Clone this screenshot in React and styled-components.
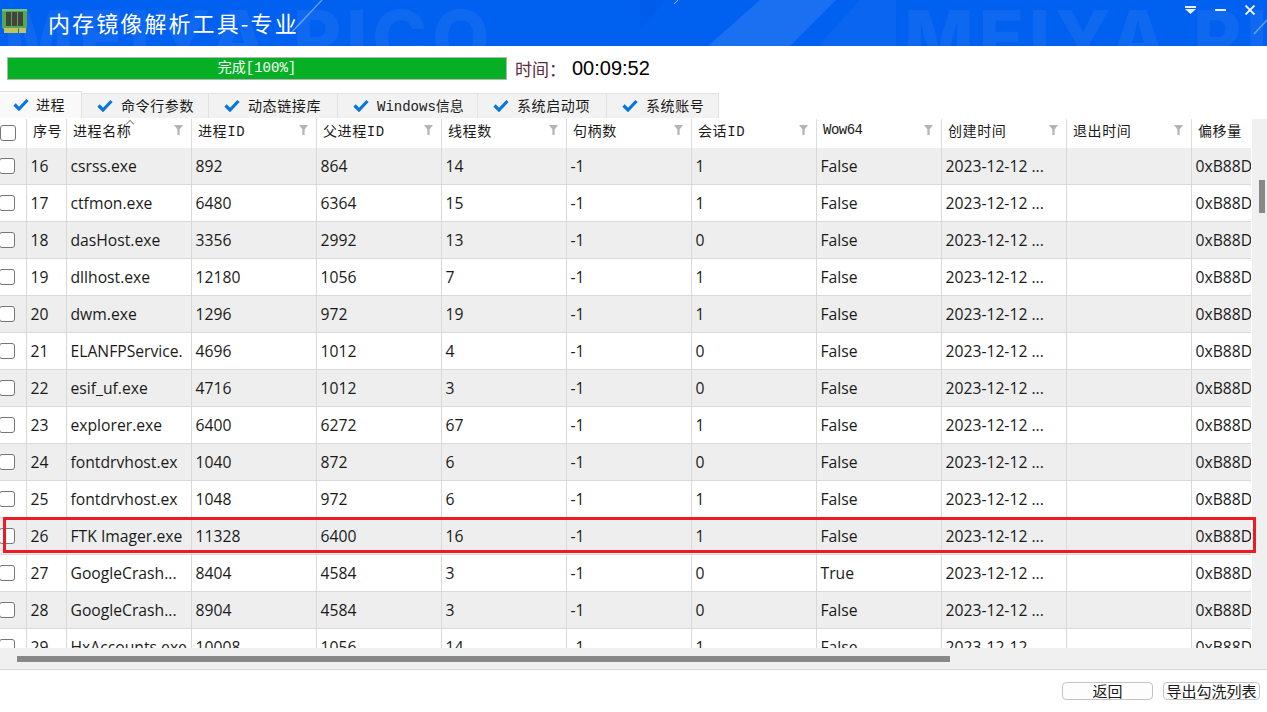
import React from "react";
import styled, { createGlobalStyle } from "styled-components";

const CJK = `"Noto Sans CJK SC", "Liberation Sans", sans-serif`;
const MONO_CJK = `"Liberation Mono", "Noto Sans CJK SC", monospace`;

const TABS = [
  { label: "进程", width: 82, active: true },
  { label: "命令行参数", width: 127 },
  { label: "动态链接库", width: 129 },
  { label: "Windows信息", width: 140, tight: true },
  { label: "系统启动项", width: 129 },
  { label: "系统账号", width: 112 },
];

const COLUMNS = ["进程名称", "进程ID", "父进程ID", "线程数", "句柄数", "会话ID", "Wow64", "创建时间", "退出时间"];

const ROWS = [
  [16, "csrss.exe", 892, 864, 14, 1, "False"],
  [17, "ctfmon.exe", 6480, 6364, 15, 1, "False"],
  [18, "dasHost.exe", 3356, 2992, 13, 0, "False"],
  [19, "dllhost.exe", 12180, 1056, 7, 1, "False"],
  [20, "dwm.exe", 1296, 972, 19, 1, "False"],
  [21, "ELANFPService.", 4696, 1012, 4, 0, "False"],
  [22, "esif_uf.exe", 4716, 1012, 3, 0, "False"],
  [23, "explorer.exe", 6400, 6272, 67, 1, "False"],
  [24, "fontdrvhost.ex", 1040, 872, 6, 0, "False"],
  [25, "fontdrvhost.ex", 1048, 972, 6, 1, "False"],
  [26, "FTK Imager.exe", 11328, 6400, 16, 1, "False"],
  [27, "GoogleCrash...", 8404, 4584, 3, 0, "True"],
  [28, "GoogleCrash...", 8904, 4584, 3, 0, "False"],
  [29, "HxAccounts.exe", 10008, 1056, 14, 1, "False"],
];

const RamIcon = () => (
  <IconSlot>
    <svg width="30" height="28" viewBox="0 0 30 28">
      <rect x="2" y="4" width="25" height="20" rx="2" fill="#55a84e" />
      <rect x="2" y="4" width="25" height="2" fill="#7cc472" />
      <rect x="6" y="7" width="5" height="14" fill="#44443f" />
      <rect x="12" y="7" width="5" height="14" fill="#44443f" />
      <rect x="18" y="7" width="5" height="14" fill="#44443f" />
      <rect x="4" y="23" width="14" height="5" fill="#c3c25c" />
      <rect x="19" y="23" width="7" height="5" fill="#c3c25c" />
    </svg>
  </IconSlot>
);

const CheckMark = () => (
  <svg width="16" height="13" viewBox="0 0 16 13">
    <path d="M1.5 6.5 L6 11 L14.5 2" fill="none" stroke="#0a76dc" strokeWidth="3.2" />
  </svg>
);

const Funnel = () => (
  <FilterIcon width="9" height="10" viewBox="0 0 9 10">
    <path d="M0 0 H9 L5.6 4.4 V10 H3.4 V4.4 Z" fill="#b4b4b4" />
  </FilterIcon>
);

const App = () => {
  return (
    <>
      <GlobalStyle />
      <Page>
        <TitleBar>
          <Streaks width="1267" height="46" viewBox="0 0 1267 46">
            <polygon points="760,0 836,0 790,46 708,46" fill="#ffffff" opacity="0.1" />
            <polygon points="860,0 896,0 896,46 818,46" fill="#ffffff" opacity="0.04" />
            <polygon points="640,0 666,0 640,30" fill="#0040d0" opacity="0.12" />
            <path d="M322 0 L290 34" stroke="#5d9df5" strokeWidth="1.5" />
            <path d="M678 0 L674 4" stroke="#9cc4fa" strokeWidth="1" />
            <path d="M1267 20 L1254 34" stroke="#5d9df5" strokeWidth="1.5" />
          </Streaks>
          <Watermark $left={4}>MEIYA PICO</Watermark>
          <Watermark $left={904}>MEIYA PICO</Watermark>
          <RamIcon />
          <AppTitle>内存镜像解析工具-专业</AppTitle>
          <WindowControls>
            <svg width="11" height="8" viewBox="0 0 11 8">
              <rect width="11" height="2" fill="#e8f0ff" />
              <path d="M0 3 H11 L5.5 8 Z" fill="#e8f0ff" />
            </svg>
            <svg width="11" height="2" viewBox="0 0 11 2">
              <rect width="11" height="2" fill="#e8f0ff" />
            </svg>
            <svg width="10" height="10" viewBox="0 0 10 10">
              <path d="M0.5 0.5 L9.5 9.5 M9.5 0.5 L0.5 9.5" stroke="#ffffff" strokeWidth="1.8" />
            </svg>
          </WindowControls>
        </TitleBar>

        <StatusRow>
          <ProgressBar>完成[100%]</ProgressBar>
          <TimeLabel>时间：</TimeLabel>
          <TimeValue>00:09:52</TimeValue>
        </StatusRow>

        <TabStrip>
          {TABS.map((tab) => (
            <Tab key={tab.label} $width={tab.width} $active={tab.active} $tight={tab.tight}>
              <CheckMark />
              <span>{tab.label}</span>
            </Tab>
          ))}
        </TabStrip>

        <TableArea>
          <TableView>
            <HeaderRow>
              <CheckCell>
                <Checkbox $header />
              </CheckCell>
              <HeadCell>序号</HeadCell>
              {COLUMNS.map((col, i) => (
                <HeadCell key={col} $tight={col === "Wow64"}>
                  {i === 0 && <SortArrow />}
                  {col}
                  <Funnel />
                </HeadCell>
              ))}
              <HeadCell>偏移量</HeadCell>
            </HeaderRow>
            {ROWS.map(([no, name, pid, ppid, threads, session, wow]) => (
              <Row key={no} $striped={no % 2 === 0}>
                <CheckCell>
                  <Checkbox />
                </CheckCell>
                <Cell>{no}</Cell>
                <Cell>{name}</Cell>
                <Cell>{pid}</Cell>
                <Cell>{ppid}</Cell>
                <Cell>{threads}</Cell>
                <Cell>-1</Cell>
                <Cell>{session}</Cell>
                <Cell>{wow}</Cell>
                <Cell>2023-12-12 ...</Cell>
                <Cell />
                <Cell>0xB88D0000</Cell>
              </Row>
            ))}
          </TableView>
          <VScroll>
            <VThumb />
          </VScroll>
          <Highlight />
        </TableArea>

        <HScroll>
          <HThumb />
        </HScroll>

        <Footer>
          <FooterButton $width={91}>返回</FooterButton>
          <FooterButton $width={97}>导出勾洗列表</FooterButton>
        </Footer>
      </Page>
    </>
  );
};
export default App;

const GlobalStyle = createGlobalStyle`
  html, body {
    margin: 0;
    padding: 0;
    background: #fff;
    overflow: hidden;
  }
  * {
    box-sizing: border-box;
  }
`;

const Page = styled.div`
  width: 1267px;
  height: 712px;
  display: flex;
  flex-direction: column;
  font-family: ${CJK};
  color: #1a1a1a;
  overflow: hidden;
`;

const TitleBar = styled.header`
  position: relative;
  height: 46px;
  flex: none;
  display: flex;
  align-items: flex-start;
  background: #0060f0;
  overflow: hidden;
`;

const Streaks = styled.svg`
  position: absolute;
  inset: 0;
`;

const Watermark = styled.span`
  position: absolute;
  left: ${({ $left }) => $left}px;
  top: 0;
  font-family: Inter, "Liberation Sans", sans-serif;
  font-size: 74px;
  font-weight: 800;
  line-height: 74px;
  letter-spacing: 5px;
  white-space: nowrap;
  color: rgba(255, 255, 255, 0.055);
`;

const IconSlot = styled.div`
  position: relative;
  width: 30px;
  height: 28px;
  margin-top: 5px;
`;

const AppTitle = styled.h1`
  position: relative;
  margin: 0 0 0 18px;
  font-size: 22px;
  font-weight: 400;
  line-height: 44px;
  letter-spacing: 2.1px;
  color: #fff;
`;

const WindowControls = styled.div`
  position: relative;
  margin-left: auto;
  display: flex;
  align-items: center;
  gap: 19px;
  width: 82px;
  height: 19px;
`;

const StatusRow = styled.div`
  height: 45px;
  flex: none;
  display: flex;
  align-items: center;
  padding-left: 7px;
`;

const ProgressBar = styled.div`
  width: 500px;
  height: 23px;
  border: 1px solid #b4b4b4;
  background: #06b025;
  color: #fff;
  font-family: ${MONO_CJK};
  font-size: 14px;
  line-height: 21px;
  text-align: center;
`;

const TimeLabel = styled.span`
  margin-left: 8px;
  font-size: 17px;
  color: #5c2c40;
`;

const TimeValue = styled.span`
  margin-left: 6px;
  font-family: "Liberation Sans", sans-serif;
  font-size: 20px;
  color: #000;
`;

const TabStrip = styled.nav`
  height: 28px;
  flex: none;
  display: flex;
  align-items: flex-start;
`;

const Tab = styled.div`
  width: ${({ $width }) => $width}px;
  height: ${({ $active }) => ($active ? 27 : 25)}px;
  margin-top: ${({ $active }) => ($active ? 0 : 2)}px;
  display: flex;
  align-items: center;
  padding: 0 0 2px ${({ $active }) => ($active ? 13 : 15)}px;
  gap: ${({ $active }) => ($active ? 7 : 8)}px;
  border: 1px solid #e2e2e2;
  border-bottom: none;
  border-left: none;
  background: ${({ $active }) => ($active ? "#f9f9f9" : "#f2f2f2")};
  font-family: ${MONO_CJK};
  font-size: 14px;
  letter-spacing: ${({ $tight }) => ($tight ? 0 : 0.6)}px;
  white-space: nowrap;
`;

const TableArea = styled.main`
  position: relative;
  flex: none;
  height: 529px;
  display: flex;
  overflow: hidden;
`;

const TableView = styled.div`
  width: 1251px;
  flex: none;
  overflow: hidden;
`;

const gridColumns = `27px 40px 125px repeat(9, 125px)`;

const HeaderRow = styled.div`
  display: grid;
  grid-template-columns: ${gridColumns};
  width: 1317px;
  height: 29px;
  background: #fff;
`;

const HeadCell = styled.div`
  position: relative;
  display: flex;
  align-items: center;
  padding: 0 0 7px 6px;
  border-right: 1px solid #dcdcdc;
  font-family: ${MONO_CJK};
  font-size: 14px;
  letter-spacing: ${({ $tight }) => ($tight ? -0.5 : 0.6)}px;
  white-space: nowrap;
`;

const FilterIcon = styled.svg`
  position: absolute;
  right: 8px;
  top: 6px;
`;

const SortArrow = styled.i`
  position: absolute;
  left: 60px;
  top: 2px;
  width: 6px;
  height: 6px;
  border-top: 1px solid #888;
  border-left: 1px solid #888;
  transform: rotate(45deg);
`;

const Row = styled.div`
  display: grid;
  grid-template-columns: ${gridColumns};
  width: 1317px;
  height: 37px;
  background: ${({ $striped }) => ($striped ? "#eeeeee" : "#fff")};
  border-bottom: 1px solid #d9d9d9;
`;

const Cell = styled.div`
  display: flex;
  align-items: center;
  padding-left: 3.5px;
  border-right: 1px solid #d9d9d9;
  font-family: "Open Sans", "Noto Sans", sans-serif;
  font-size: 15.7px;
  white-space: nowrap;
  overflow: hidden;
`;

const CheckCell = styled.div`
  display: flex;
  align-items: center;
  border-right: 1px solid #d9d9d9;
`;

const Checkbox = styled.span`
  display: block;
  width: 16px;
  height: 16px;
  margin-left: ${({ $header }) => ($header ? 0 : -1)}px;
  margin-bottom: ${({ $header }) => ($header ? 2 : 1)}px;
  background: #fff;
  border: 1px solid #767676;
  border-radius: 3px;
`;

const Highlight = styled.div`
  position: absolute;
  left: 3px;
  top: 398px;
  width: 1253px;
  height: 36px;
  border: 3px solid #ed1c24;
`;

const VScroll = styled.div`
  position: relative;
  flex: 1;
  margin-left: 1px;
  background: #f0f0f0;
`;

const VThumb = styled.div`
  position: absolute;
  left: 7px;
  top: 61px;
  width: 6px;
  height: 33px;
  background: #888;
`;

const HScroll = styled.div`
  height: 22px;
  flex: none;
  padding: 8px 0 0 17px;
  background: #f0f0f0;
  border-bottom: 1px solid #d8d8d8;
`;

const HThumb = styled.div`
  width: 933px;
  height: 6px;
  background: #888;
`;

const Footer = styled.footer`
  flex: 1;
  display: flex;
  justify-content: flex-end;
  gap: 10px;
  padding: 12px 7px 0 0;
`;

const FooterButton = styled.button`
  width: ${({ $width }) => $width}px;
  height: 18px;
  padding: 0;
  background: #fdfdfd;
  border: 1px solid #c4c4c4;
  border-radius: 4px;
  font-family: ${CJK};
  font-size: 15px;
  line-height: 16px;
  color: #1a1a1a;
`;
